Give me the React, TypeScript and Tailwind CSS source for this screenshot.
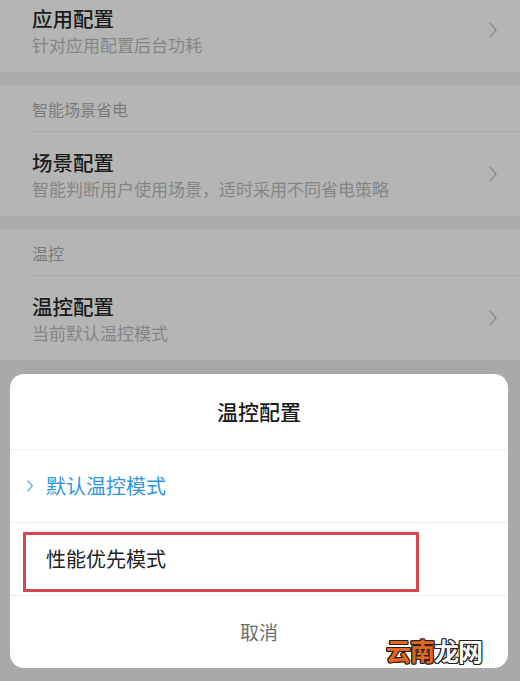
const font = "font-['Noto_Sans_CJK_SC','Noto_Sans',sans-serif]";

function Chevron({ className }: { className?: string }) {
  return (
    <svg width="10" height="18" viewBox="0 0 10 18" className={className}>
      <polyline points="2,2 8,9 2,16" fill="none" stroke="currentColor" strokeWidth="1.4" />
    </svg>
  );
}

function SettingRow({ title, desc }: { title: string; desc: string }) {
  return (
    <div className="flex items-center h-[84px] pl-8 pr-[22px]">
      <div className="flex-1 flex flex-col">
        <span className="text-[20.5px] leading-[29px] text-[#1c1c1c] font-medium">{title}</span>
        <span className="text-[17px] leading-[24px] text-[#858585]">{desc}</span>
      </div>
      <Chevron className="text-[#8a8a8a]" />
    </div>
  );
}

function SectionHeader({ label }: { label: string }) {
  return (
    <div className="pl-8">
      <div className="h-[46px] flex items-center border-b border-[#a9a9a9]">
        <span className="text-[16px] text-[#7b7b7b]">{label}</span>
      </div>
    </div>
  );
}

function Gap() {
  return <div className="h-[14px] bg-gradient-to-b from-[#a9a9a9] to-[#aeaeae]" />;
}

export default function App() {
  return (
    <div className={`relative w-[520px] h-[681px] overflow-hidden bg-[#a9a9a9] ${font}`}>
      {/* settings list behind the sheet */}
      <div className="bg-[#b5b5b5] -mt-[12px]">
        <SettingRow title="应用配置" desc="针对应用配置后台功耗" />
      </div>
      <Gap />
      <div className="bg-[#b5b5b5]">
        <SectionHeader label="智能场景省电" />
        <SettingRow title="场景配置" desc="智能判断用户使用场景，适时采用不同省电策略" />
      </div>
      <Gap />
      <div className="bg-[#b5b5b5]">
        <SectionHeader label="温控" />
        <SettingRow title="温控配置" desc="当前默认温控模式" />
      </div>

      {/* bottom sheet */}
      <div className="absolute left-[10px] top-[374px] w-[498px] h-[294px] bg-white rounded-[14px] flex flex-col">
        <div className="h-[76px] flex items-center justify-center border-b border-[#ececec]">
          <span className="text-[21px] text-[#1a1a1a] font-medium">温控配置</span>
        </div>
        <div className="h-[73px] flex items-center pl-4 gap-[12px] border-b border-[#ececec]">
          <Chevron className="text-[#3a9be0] w-[8px] h-[14px]" />
          <span className="text-[20px] text-[#2f96de]">默认温控模式</span>
        </div>
        <div className="relative h-[73px] flex items-center pl-9 border-b border-[#ececec]">
          <span className="text-[20px] text-[#222]">性能优先模式</span>
          <div className="absolute left-[13px] top-[9px] w-[396px] h-[60px] border-[3px] border-[#d9474d]" />
        </div>
        <div className="flex-1 flex items-center justify-center">
          <span className="text-[19px] text-[#6e6e6e]">取消</span>
        </div>
      </div>

      {/* site watermark */}
      <div className="absolute left-[386px] top-[634px] text-[25px] font-bold leading-[32px] tracking-[-1px] [text-shadow:1px_1px_0_#222,-1px_-1px_0_#222,1px_-1px_0_#222,-1px_1px_0_#222,0_1px_0_#222,0_-1px_0_#222,1px_0_0_#222,-1px_0_0_#222]">
        <span className="text-[#e8661c]">云南</span>
        <span className="text-white">龙网</span>
      </div>
    </div>
  );
}
